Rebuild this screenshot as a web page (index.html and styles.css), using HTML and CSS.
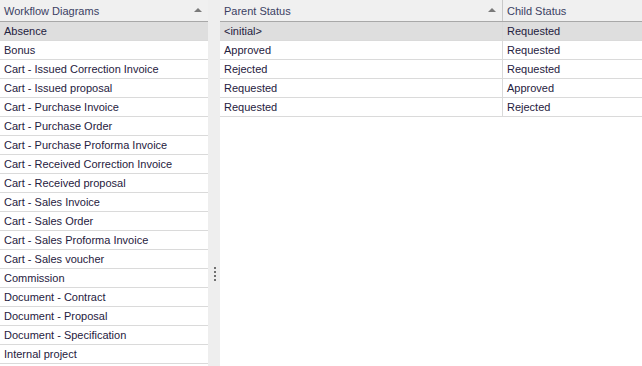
FILE: index.html
```html
<!DOCTYPE html>
<html lang="en">
<head>
  <meta charset="UTF-8">
  <title>Workflow Diagrams</title>
  <link rel="stylesheet" href="styles.css">
</head>
<body>
  <div class="layout">
    <!-- Liste over diagrammer -->
    <div class="grid left">
      <div class="head">
        <div class="hcell wide">Workflow Diagrams<span class="arrow"></span></div>
      </div>
      <div class="row sel"><div class="cell wide">Absence</div></div>
      <div class="row"><div class="cell wide">Bonus</div></div>
      <div class="row"><div class="cell wide">Cart - Issued Correction Invoice</div></div>
      <div class="row"><div class="cell wide">Cart - Issued proposal</div></div>
      <div class="row"><div class="cell wide">Cart - Purchase Invoice</div></div>
      <div class="row"><div class="cell wide">Cart - Purchase Order</div></div>
      <div class="row"><div class="cell wide">Cart - Purchase Proforma Invoice</div></div>
      <div class="row"><div class="cell wide">Cart - Received Correction Invoice</div></div>
      <div class="row"><div class="cell wide">Cart - Received proposal</div></div>
      <div class="row"><div class="cell wide">Cart - Sales Invoice</div></div>
      <div class="row"><div class="cell wide">Cart - Sales Order</div></div>
      <div class="row"><div class="cell wide">Cart - Sales Proforma Invoice</div></div>
      <div class="row"><div class="cell wide">Cart - Sales voucher</div></div>
      <div class="row"><div class="cell wide">Commission</div></div>
      <div class="row"><div class="cell wide">Document - Contract</div></div>
      <div class="row"><div class="cell wide">Document - Proposal</div></div>
      <div class="row"><div class="cell wide">Document - Specification</div></div>
      <div class="row"><div class="cell wide">Internal project</div></div>
    </div>

    <div class="splitter">
      <span class="dots"><i></i><i></i><i></i><i></i></span>
    </div>

    <!-- Statusoverganger -->
    <div class="grid right">
      <div class="head">
        <div class="hcell parent">Parent Status<span class="arrow"></span></div>
        <div class="hcell child">Child Status</div>
      </div>
      <div class="row sel"><div class="cell parent">&lt;initial&gt;</div><div class="cell child">Requested</div></div>
      <div class="row"><div class="cell parent">Approved</div><div class="cell child">Requested</div></div>
      <div class="row"><div class="cell parent">Rejected</div><div class="cell child">Requested</div></div>
      <div class="row"><div class="cell parent">Requested</div><div class="cell child">Approved</div></div>
      <div class="row"><div class="cell parent">Requested</div><div class="cell child">Rejected</div></div>
    </div>
  </div>
</body>
</html>
```

FILE: styles.css
```css
* { box-sizing: border-box; }
body {
  margin: 0;
  background: #fff;
  font-family: "Liberation Sans", Arial, sans-serif;
  font-size: 11px;
  color: #1f2140;
  overflow: hidden;
}
.layout {
  display: flex;
  height: 366px;
}
.grid {
  background: #fff;
}
.left { width: 208px; }
.right { flex: 1; }
.splitter {
  width: 12px;
  background: #eeeeee;
  display: flex;
  justify-content: center;
  padding-top: 267px;
}
.dots {
  display: flex;
  flex-direction: column;
  gap: 2px;
  padding-left: 1px;
}
.dots i {
  display: block;
  width: 2px;
  height: 2px;
  background: #707070;
}
.head {
  display: flex;
  height: 22px;
  background: #f0f0f0;
  border-bottom: 1px solid #a8a8a8;
}
.hcell {
  position: relative;
  padding: 5px 0 0 4px;
  color: #3b3f63;
}
.row {
  display: flex;
  height: 19px;
  border-bottom: 1px solid #dadada;
}
.row.sel { background: #dedede; }
.cell {
  padding: 3px 0 0 4px;
  white-space: nowrap;
}
.wide { flex: 1; }
.parent {
  width: 283px;
  border-right: 1px solid #dadada;
}
.hcell.parent { border-right-color: #c8c8c8; }
.child { flex: 1; }
.arrow {
  position: absolute;
  right: 6px;
  top: 8px;
  width: 0;
  height: 0;
  border-left: 4px solid transparent;
  border-right: 4px solid transparent;
  border-bottom: 4px solid #7a7a7a;
}
```
